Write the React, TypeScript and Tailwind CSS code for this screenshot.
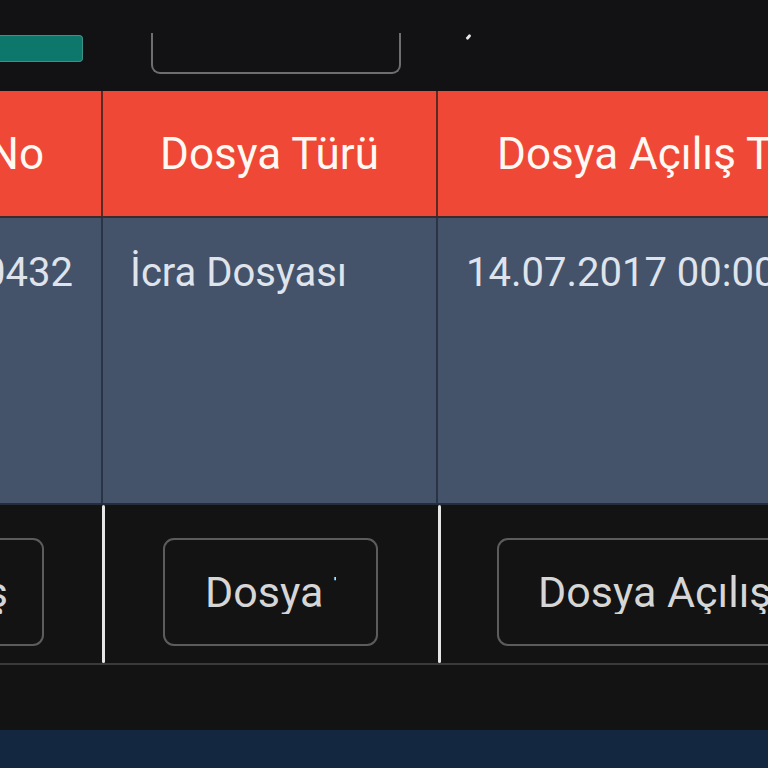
import React from 'react';

function TopBar() {
  return (
    <div className="flex h-[91px] shrink-0 items-start">
      <div className="mt-[35px] h-[27px] w-[83px] shrink-0 rounded-r-[4px] border border-l-0 border-[#3f9185] bg-[#0e776b]" />
      <div className="ml-[68px] mt-[33px] h-[41px] w-[250px] shrink-0 rounded-b-[9px] border-2 border-t-0 border-[#6e6e70]" />
      <div className="ml-[66px] mt-[34px] h-[6px] w-[3px] shrink-0 rotate-[40deg] rounded-full bg-[#e8e8e8]" />
    </div>
  );
}

function HeaderRow() {
  return (
    <div className="flex h-[127px] shrink-0 border-b-2 border-[#3c2b2a] bg-[#ef4836] text-[44px] leading-none text-[#fff8f3]">
      <div className="flex w-[103px] shrink-0 items-center justify-end overflow-hidden whitespace-nowrap border-r-2 border-[#5c2a23] pr-[57px]">
        Dosya No
      </div>
      <div className="flex w-[335px] shrink-0 items-center justify-center whitespace-nowrap border-r-2 border-[#5c2a23]">
        Dosya Türü
      </div>
      <div className="flex flex-1 items-center overflow-hidden whitespace-nowrap pl-[59px]">
        Dosya Açılış Tarihi
      </div>
    </div>
  );
}

function BodyRow() {
  return (
    <div className="flex h-[287px] shrink-0 border-b-2 border-[#262d3a] bg-[#44526a] text-[40px] leading-none text-[#dfe4ec]">
      <div className="flex w-[103px] shrink-0 justify-end overflow-hidden whitespace-nowrap border-r-2 border-[#2b3445] pr-[28px] pt-[35px]">
        2017/10432
      </div>
      <div className="w-[335px] shrink-0 whitespace-nowrap border-r-2 border-[#2b3445] pl-[27px] pt-[35px]">
        İcra Dosyası
      </div>
      <div className="flex-1 overflow-hidden whitespace-nowrap pl-[28px] pt-[35px]">
        14.07.2017 00:00:00
      </div>
    </div>
  );
}

function FilterRow() {
  return (
    <div className="flex h-[160px] shrink-0 border-b-2 border-[#3a3a3b] bg-[#131313] text-[43px] leading-none text-[#d6d6d6]">
      <div className="flex w-[102px] shrink-0 justify-end overflow-hidden">
        <div className="mr-[58px] mt-[33px] flex h-[108px] w-[215px] shrink-0 items-center rounded-[11px] border-2 border-[#5c5c5e] pl-[40px] pr-[34px]">
          <div className="flex flex-1 justify-end overflow-hidden whitespace-nowrap">Dosya Açılış</div>
        </div>
      </div>
      <div className="w-[3px] shrink-0 rounded-full bg-[#e6e6e6]" />
      <div className="w-[333px] shrink-0">
        <div className="ml-[58px] mt-[33px] flex h-[108px] w-[215px] items-center rounded-[11px] border-2 border-[#5c5c5e] pl-[40px]">
          <div className="w-[131px] overflow-hidden whitespace-nowrap">Dosya Türü</div>
        </div>
      </div>
      <div className="w-[3px] shrink-0 rounded-full bg-[#e6e6e6]" />
      <div className="flex-1 overflow-hidden">
        <div className="ml-[56px] mt-[33px] flex h-[108px] w-[420px] items-center rounded-[11px] border-2 border-[#5c5c5e] pl-[39px]">
          <div className="overflow-hidden whitespace-nowrap">Dosya Açılış Tarihi</div>
        </div>
      </div>
    </div>
  );
}

export default function App() {
  return (
    <div className="flex h-[768px] w-[768px] flex-col overflow-hidden bg-[#121214] font-['Roboto',sans-serif]">
      <TopBar />
      <HeaderRow />
      <BodyRow />
      <FilterRow />
      <div className="flex-1 bg-[#131313]" />
      <div className="h-[38px] shrink-0 bg-[#132840]" />
    </div>
  );
}
